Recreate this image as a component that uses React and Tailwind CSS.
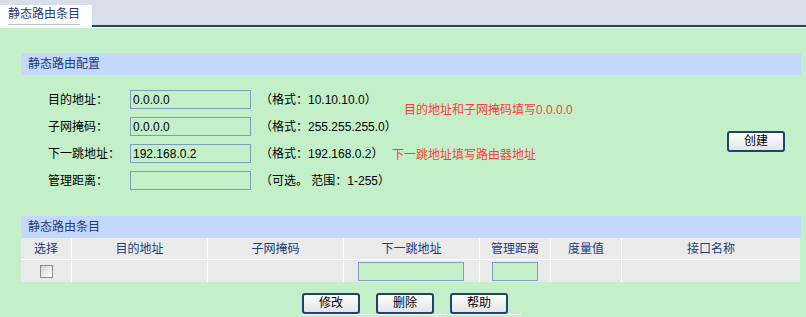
import React from 'react';

const FONT = { fontFamily: '"Liberation Sans", "Noto Sans CJK SC", sans-serif' };

const formRows = [
    { label: '目的地址：', value: '0.0.0.0', hint: '（格式：10.10.10.0）' },
    { label: '子网掩码：', value: '0.0.0.0', hint: '（格式：255.255.255.0）' },
    { label: '下一跳地址：', value: '192.168.0.2', hint: '（格式：192.168.0.2）' },
    { label: '管理距离：', value: '', hint: '（可选。 范围：1-255）' },
];

const columns = [
    { title: '选择', w: 'w-[51px]' },
    { title: '目的地址', w: 'w-[136px]' },
    { title: '子网掩码', w: 'w-[136px]' },
    { title: '下一跳地址', w: 'w-[136px]' },
    { title: '管理距离', w: 'w-[71px]' },
    { title: '度量值', w: 'w-[71px]' },
    { title: '接口名称', w: 'flex-1' },
];

const Btn = ({ children }) => (
    <button className="w-[58px] h-[21px] rounded-[3px] border-2 border-[#1d4273] bg-gradient-to-b from-white to-[#e4e4e4] text-[12px] text-black leading-none">
        {children}
    </button>
);

const SectionBar = ({ children }) => (
    <div className="h-[22px] bg-[#c4d8fe] flex items-center pl-[7px] text-[12px] text-[#1c3a7c]">
        {children}
    </div>
);

const App = () => {
    return (
        <div className="w-[806px] h-[317px] bg-[#c3f0c9] overflow-hidden" style={FONT}>
            {/* Tab strip */}
            <div className="flex h-[28px]">
                <div className="w-[92px] flex flex-col">
                    <div className="h-[5px] bg-[#d8dfe9]" />
                    <div className="flex-1 bg-white pl-[8px] pt-[1px]">
                        <div className="w-[72px] h-[19px] border-b border-[#bcc4cc] text-[12px] leading-[17px] text-[#1c3a7c]">
                            静态路由条目
                        </div>
                    </div>
                </div>
                <div className="flex-1 flex flex-col">
                    <div className="flex-1 bg-[#d8dfe9]" />
                    <div className="h-[2px] bg-[#27495c]" />
                    <div className="h-px bg-white" />
                </div>
            </div>

            <div className="pl-[21px] pr-[5px]">
                {/* Config section */}
                <div className="mt-[25px]">
                    <SectionBar>静态路由配置</SectionBar>
                    <div className="relative flex justify-between items-center mt-[15px]">
                        <div className="flex flex-col gap-[8px] pl-[27px]">
                            {formRows.map((r) => (
                                <div key={r.label} className="flex items-center h-[19px] text-[12px] text-black">
                                    <div className="w-[82px]">{r.label}</div>
                                    <div className="w-[121px] h-[19px] border border-[#7f9db9] flex items-center pl-[2px]">
                                        {r.value}
                                    </div>
                                    <div className="ml-[9px]">{r.hint}</div>
                                </div>
                            ))}
                        </div>
                        <div className="mr-[16px]">
                            <Btn>创建</Btn>
                        </div>
                        {/* annotations */}
                        <div className="absolute left-[383px] top-[11px] text-[12px] text-[#ff3b3b]">
                            目的地址和子网掩码填写0.0.0.0
                        </div>
                        <div className="absolute left-[371px] top-[56px] text-[12px] text-[#ff3b3b]">
                            下一跳地址填写路由器地址
                        </div>
                    </div>
                </div>

                {/* Entries section */}
                <div className="mt-[26px]">
                    <SectionBar>静态路由条目</SectionBar>
                    <div className="bg-[#eaeaea] text-[12px] mr-px">
                        <div className="flex h-[22px] border-b border-white">
                            {columns.map((c, i) => (
                                <div
                                    key={c.title}
                                    className={`${c.w} flex items-center justify-center text-[#1c3a7c] ${i < columns.length - 1 ? 'border-r border-white' : ''}`}
                                >
                                    {c.title}
                                </div>
                            ))}
                        </div>
                        <div className="flex h-[22px]">
                            <div className="w-[51px] border-r border-white flex items-center justify-center">
                                <div className="w-[13px] h-[13px] border border-[#8c8c8c] bg-gradient-to-br from-[#d4d4d4] to-white" />
                            </div>
                            <div className="w-[136px] border-r border-white" />
                            <div className="w-[136px] border-r border-white" />
                            <div className="w-[136px] border-r border-white flex items-center pl-[14px]">
                                <div className="w-[106px] h-[19px] border border-[#7f9db9] bg-[#c3f0c9]" />
                            </div>
                            <div className="w-[71px] border-r border-white flex items-center pl-[12px]">
                                <div className="w-[46px] h-[19px] border border-[#7f9db9] bg-[#c3f0c9]" />
                            </div>
                            <div className="w-[71px] border-r border-white" />
                            <div className="flex-1" />
                        </div>
                    </div>
                </div>

                {/* Actions */}
                <div className="flex gap-[2px] pl-[280px] mt-[8px]">
                    {['修改', '删除', '帮助'].map((t) => (
                        <div key={t} className="w-[72px] border-b border-white pl-px">
                            <Btn>{t}</Btn>
                        </div>
                    ))}
                </div>
            </div>
        </div>
    );
};

export default App;
